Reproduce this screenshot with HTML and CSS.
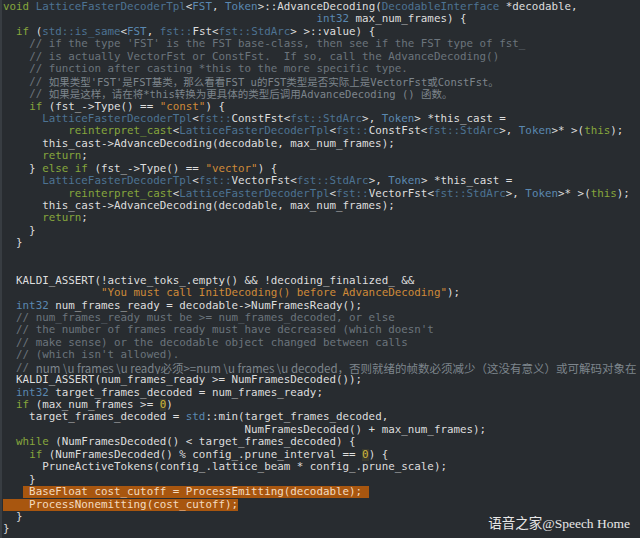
FILE: index.html
```html
<!DOCTYPE html>
<html lang="zh">
<head>
  <meta charset="UTF-8">
  <title>AdvanceDecoding</title>
  <link rel="stylesheet" href="styles.css">
</head>
<body>
  <div class="code">
<div class="ln"><span class="kw">void</span> <span class="ty">LatticeFasterDecoderTpl</span>&lt;<span class="tp">FST</span>, <span class="tp">Token</span>&gt;::AdvanceDecoding(<span class="ty">DecodableInterface</span> *decodable,</div>
<div class="ln">                                                <span class="tp">int32</span> max_num_frames) {</div>
<div class="ln">  <span class="kw">if</span> (<span class="ty">std::is_same</span>&lt;<span class="tp">FST</span>, <span class="ty">fst::</span>Fst&lt;<span class="ty">fst::StdArc</span>&gt; &gt;::value) {</div>
<div class="ln">    <span class="cm">// if the type 'FST' is the FST base-class, then see if the FST type of fst_</span></div>
<div class="ln">    <span class="cm">// is actually VectorFst or ConstFst.  If so, call the AdvanceDecoding()</span></div>
<div class="ln">    <span class="cm">// function after casting *this to the more specific type.</span></div>
<div class="ln">    <span class="cm">//</span> <span class="zh zh-mono">如果类型'FST'是FST基类，那么看看FST u的FST类型是否实际上是VectorFst或ConstFst。</span></div>
<div class="ln">    <span class="cm">//</span> <span class="zh zh-mono">如果是这样，请在将*this转换为更具体的类型后调用AdvanceDecoding () 函数。</span></div>
<div class="ln">    <span class="kw">if</span> (fst_-&gt;Type() == <span class="st">"const"</span>) {</div>
<div class="ln">      <span class="ty">LatticeFasterDecoderTpl</span>&lt;<span class="ty">fst::</span>ConstFst&lt;<span class="ty">fst::StdArc</span>&gt;, <span class="tp">Token</span>&gt; *this_cast =</div>
<div class="ln">          <span class="kw">reinterpret_cast</span>&lt;<span class="ty">LatticeFasterDecoderTpl</span>&lt;<span class="ty">fst::</span>ConstFst&lt;<span class="ty">fst::StdArc</span>&gt;, <span class="tp">Token</span>&gt;* &gt;(<span class="kw">this</span>);</div>
<div class="ln">      this_cast-&gt;AdvanceDecoding(decodable, max_num_frames);</div>
<div class="ln">      <span class="kw">return</span>;</div>
<div class="ln">    } <span class="kw">else if</span> (fst_-&gt;Type() == <span class="st">"vector"</span>) {</div>
<div class="ln">      <span class="ty">LatticeFasterDecoderTpl</span>&lt;<span class="ty">fst::</span>VectorFst&lt;<span class="ty">fst::StdArc</span>&gt;, <span class="tp">Token</span>&gt; *this_cast =</div>
<div class="ln">          <span class="kw">reinterpret_cast</span>&lt;<span class="ty">LatticeFasterDecoderTpl</span>&lt;<span class="ty">fst::</span>VectorFst&lt;<span class="ty">fst::StdArc</span>&gt;, <span class="tp">Token</span>&gt;* &gt;(<span class="kw">this</span>);</div>
<div class="ln">      this_cast-&gt;AdvanceDecoding(decodable, max_num_frames);</div>
<div class="ln">      <span class="kw">return</span>;</div>
<div class="ln">    }</div>
<div class="ln">  }</div>
<div class="ln"></div>
<div class="ln"></div>
<div class="ln">  KALDI_ASSERT(!active_toks_.empty() &amp;&amp; !decoding_finalized_ &amp;&amp;</div>
<div class="ln">               <span class="st">"You must call InitDecoding() before AdvanceDecoding"</span>);</div>
<div class="ln">  <span class="tp">int32</span> num_frames_ready = decodable-&gt;NumFramesReady();</div>
<div class="ln">  <span class="cm">// num_frames_ready must be &gt;= num_frames_decoded, or else</span></div>
<div class="ln">  <span class="cm">// the number of frames ready must have decreased (which doesn't</span></div>
<div class="ln">  <span class="cm">// make sense) or the decodable object changed between calls</span></div>
<div class="ln">  <span class="cm">// (which isn't allowed).</span></div>
<div class="ln">  <span class="cm">//</span> <span class="zh zh-wide">num \u frames \u ready必须&gt;=num \u frames \u decoded，否则就绪的帧数必须减少（这没有意义）或可解码对象在</span></div>
<div class="ln">  KALDI_ASSERT(num_frames_ready &gt;= NumFramesDecoded());</div>
<div class="ln">  <span class="tp">int32</span> target_frames_decoded = num_frames_ready;</div>
<div class="ln">  <span class="kw">if</span> (max_num_frames &gt;= <span class="nu">0</span>)</div>
<div class="ln">    target_frames_decoded = <span class="tp">std</span>::min(target_frames_decoded,</div>
<div class="ln">                                     NumFramesDecoded() + max_num_frames);</div>
<div class="ln">  <span class="kw">while</span> (NumFramesDecoded() &lt; target_frames_decoded) {</div>
<div class="ln">    <span class="kw">if</span> (NumFramesDecoded() % config_.prune_interval == <span class="nu">0</span>) {</div>
<div class="ln">      PruneActiveTokens(config_.lattice_beam * config_.prune_scale);</div>
<div class="ln">    }</div>
<div class="ln">   <span class="sel"> BaseFloat cost_cutoff = ProcessEmitting(decodable); </span></div>
<div class="ln"><span class="sel sel-full">    ProcessNonemitting(cost_cutoff);</span></div>
<div class="ln">  }</div>
<div class="ln">}</div>
  </div>
  <div class="mark">语音之家@Speech Home</div>
</body>
</html>
```

FILE: styles.css
```css
body { margin: 0; height: 538px; overflow: hidden; position: relative; background: linear-gradient(to right, #383d42 2px, #282c30 2px); }
.code { font-family: "DejaVu Sans Mono", monospace; font-size: 10.85px; line-height: 12.45px; color: #dedede; padding: 1px 0 0 3px; overflow: hidden; }
.ln { height: 12.45px; white-space: pre; overflow: hidden; }
.kw { color: #86a63c; }
.ty { color: #4d7393; }
.tp { color: #5a88b0; }
.cm { color: #6b747c; }
.zh { display: inline-block; height: 12.45px; line-height: 12.45px; vertical-align: top; font-family: "Noto Sans CJK SC", sans-serif; color: #7d858c; }
.zh-mono { font-family: "DejaVu Sans Mono", "Noto Sans CJK SC", monospace; font-size: 10.5px; }
.zh-wide { font-size: 11.5px; }
.st { color: #cf8a38; }
.nu { color: #cdb53c; background: #3a3a2e; }
.sel { background: #a8560f; color: #f4dcc0; }
.sel-full { margin-left: -3px; padding-left: 3px; }
.mark { position: absolute; right: 10px; bottom: 6px; font-family: "Liberation Serif", "Noto Sans CJK SC", serif; font-size: 13.5px; color: #e8e8e8; }
```
